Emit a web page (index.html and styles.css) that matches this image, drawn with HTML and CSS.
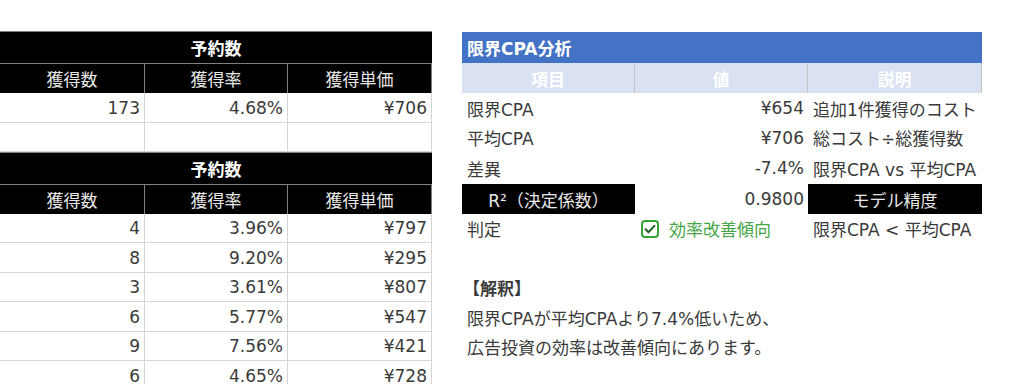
FILE: index.html
```html
<!DOCTYPE html>
<html lang="ja">
<head>
<meta charset="utf-8">
<title>限界CPA分析</title>
<link rel="stylesheet" href="styles.css">
</head>
<body>
<div class="page">
  <div class="left grid">
    <div class="ttl">予約数</div>
    <div class="th">獲得数</div><div class="th">獲得率</div><div class="th">獲得単価</div>
    <div class="td num">173</div><div class="td num">4.68%</div><div class="td num">¥706</div>
    <div class="td"></div><div class="td"></div><div class="td"></div>
    <div class="ttl">予約数</div>
    <div class="th">獲得数</div><div class="th">獲得率</div><div class="th">獲得単価</div>
    <div class="td num">4</div><div class="td num">3.96%</div><div class="td num">¥797</div>
    <div class="td num">8</div><div class="td num">9.20%</div><div class="td num">¥295</div>
    <div class="td num">3</div><div class="td num">3.61%</div><div class="td num">¥807</div>
    <div class="td num">6</div><div class="td num">5.77%</div><div class="td num">¥547</div>
    <div class="td num">9</div><div class="td num">7.56%</div><div class="td num">¥421</div>
    <div class="td num">6</div><div class="td num">4.65%</div><div class="td num">¥728</div>
  </div>
  <div class="right grid">
    <div class="rhead">限界CPA分析</div>
    <div class="rsub">項目</div><div class="rsub">値</div><div class="rsub">説明</div>
    <div class="rc lbl">限界CPA</div><div class="rc num">¥654</div><div class="rc desc">追加1件獲得のコスト</div>
    <div class="rc lbl">平均CPA</div><div class="rc num">¥706</div><div class="rc desc">総コスト÷総獲得数</div>
    <div class="rc lbl">差異</div><div class="rc num">-7.4%</div><div class="rc desc">限界CPA vs 平均CPA</div>
    <div class="rc blk">R²（決定係数）</div><div class="rc num">0.9800</div><div class="rc blk">モデル精度</div>
    <div class="rc lbl">判定</div>
    <div class="rc judge">
      <svg class="check" width="18" height="18" viewBox="0 0 18 18" aria-hidden="true">
        <rect x="1" y="1" width="16" height="16" rx="3" fill="#fff" stroke="#34a534" stroke-width="2"/>
        <path d="M4.6 9.2 L7.6 12.2 L13.4 5.8" fill="none" stroke="#1f5f1f" stroke-width="2" stroke-linecap="round" stroke-linejoin="round"/>
      </svg>
      <span class="good">効率改善傾向</span>
    </div>
    <div class="rc desc">限界CPA &lt; 平均CPA</div>
    <div class="rc wide"></div>
    <div class="rc wide note-title">【解釈】</div>
    <div class="rc wide note">限界CPAが平均CPAより7.4%低いため、</div>
    <div class="rc wide note">広告投資の効率は改善傾向にあります。</div>
    <div class="rc wide"></div>
  </div>
</div>
</body>
</html>
```

FILE: styles.css
```css
* { box-sizing: border-box; }
html, body { margin: 0; padding: 0; background: #fff; }
body {
  font-family: "DejaVu Sans", "Noto Sans CJK JP", sans-serif;
  font-size: 17px;
  color: #3a3a3a;
  overflow: hidden;
}
.page {
  display: flex;
  gap: 30px;
  padding-top: 31px;
  width: 1024px;
  height: 384px;
}
.grid {
  display: grid;
  grid-template-rows: 32px 30px 30px 29px 32px 30px 29px 30px 29px 30px 29px 30px;
}
.left {
  grid-template-columns: 145px 143px 144px;
  width: 432px;
}
.right {
  grid-template-columns: 173px 173px 174px;
  width: 520px;
}
.ttl {
  grid-column: span 3;
  background: #000;
  color: #fff;
  font-weight: bold;
  display: flex;
  align-items: center;
  justify-content: center;
  border-top: 1px solid #7f7f7f;
}
.th {
  background: #000;
  color: #e8e8e8;
  display: flex;
  align-items: center;
  justify-content: center;
  border-top: 1px solid #7f7f7f;
  border-right: 1px solid #7f7f7f;
}
.td {
  display: flex;
  align-items: center;
  border-right: 1px solid #d4d4d4;
  border-bottom: 1px solid #d4d4d4;
}
.num {
  justify-content: flex-end;
  padding-right: 4px;
  white-space: nowrap;
}
.rhead {
  grid-column: span 3;
  background: #4472c4;
  color: #fff;
  font-weight: bold;
  display: flex;
  align-items: center;
  padding-left: 5px;
  border-top: 1px solid #fff;
}
.rsub {
  background: #d9e1f2;
  color: #fff;
  font-weight: bold;
  display: flex;
  align-items: center;
  justify-content: center;
  border-right: 1px solid #c4c4c4;
}
.rc {
  display: flex;
  align-items: center;
  white-space: nowrap;
}
.lbl { padding-left: 5px; }
.desc { padding-left: 5px; }
.blk {
  background: #000;
  color: #e8e8e8;
  justify-content: center;
}
.judge {
  padding-left: 6px;
  gap: 10px;
}
.check { flex: none; }
.good { color: #46a546; }
.wide { grid-column: span 3; padding-left: 5px; }
.note-title { font-weight: bold; padding-left: 1px; }
```
